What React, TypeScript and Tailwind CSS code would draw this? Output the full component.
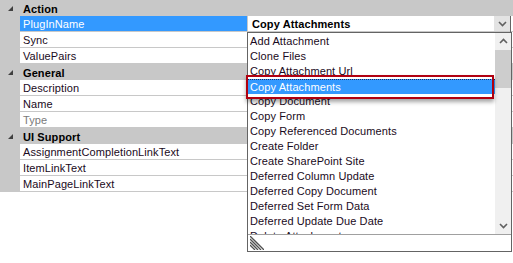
import React from 'react';

const font = { fontFamily: '"Liberation Sans", Arial, sans-serif' };

type Row = { name: string; selected?: boolean; readOnly?: boolean; value?: boolean };
type Category = { title: string; rows: Row[] };

const categories: Category[] = [
  {
    title: 'Action',
    rows: [{ name: 'PlugInName', selected: true, value: true }, { name: 'Sync' }, { name: 'ValuePairs' }],
  },
  {
    title: 'General',
    rows: [{ name: 'Description' }, { name: 'Name' }, { name: 'Type', readOnly: true }],
  },
  {
    title: 'UI Support',
    rows: [{ name: 'AssignmentCompletionLinkText' }, { name: 'ItemLinkText' }, { name: 'MainPageLinkText' }],
  },
];

const items = [
  'Add Attachment',
  'Clone Files',
  'Copy Attachment Url',
  'Copy Attachments',
  'Copy Document',
  'Copy Form',
  'Copy Referenced Documents',
  'Create Folder',
  'Create SharePoint Site',
  'Deferred Column Update',
  'Deferred Copy Document',
  'Deferred Set Form Data',
  'Deferred Update Due Date',
  'Delete Attachment',
];

function Chevron({ up }: { up?: boolean }) {
  return (
    <svg width="9" height="6" viewBox="0 0 9 6">
      <polyline
        points={up ? '1,5 4.5,1.5 8,5' : '1,1 4.5,4.5 8,1'}
        fill="none"
        stroke="#606060"
        strokeWidth="1.6"
      />
    </svg>
  );
}

function Expander() {
  return (
    <svg width="5" height="5" viewBox="0 0 5 5">
      <polygon points="5,0 5,5 0,5" fill="#404040" />
    </svg>
  );
}

export default function App() {
  return (
    <div className="relative w-[513px] h-[263px] bg-white overflow-hidden text-[11px] tracking-[0.1px] text-[#1a0a22]" style={font}>
      {/* property grid */}
      <div className="flex flex-col">
        {categories.map((cat) => (
          <div key={cat.title} className="flex flex-col">
            <div className="flex h-4 bg-[#c8c8c8] items-center">
              <div className="w-5 h-4 flex items-center justify-center pl-px pt-px">
                <Expander />
              </div>
              <span className="pl-[3px] pt-px font-bold text-black leading-4">{cat.title}</span>
            </div>
            {cat.rows.map((row) => (
              <div key={row.name} className="flex h-4">
                <div className="w-5 h-4 bg-[#c8c8c8]" />
                <div
                  className={
                    row.selected
                      ? 'w-[227px] h-4 pl-[3px] pt-px leading-[15px] bg-[#3399ff] text-white border-b border-[#c8c8c8]'
                      : row.readOnly
                        ? 'w-[227px] h-4 pl-[3px] pt-px leading-[15px] text-[#7a7a7a] border-b border-[#c8c8c8]'
                        : 'w-[227px] h-4 pl-[3px] pt-px leading-[15px] border-b border-[#c8c8c8]'
                  }
                >
                  {row.name}
                </div>
                <div className="flex-1 h-4 flex border-b border-[#c8c8c8] border-l border-l-[#c8c8c8]">
                  {row.value && (
                    <>
                      <span className="flex-1 pl-1 pt-px leading-[15px] font-bold text-black">Copy Attachments</span>
                      <div className="w-4 h-[15px] bg-[#e3e3e3] flex items-center justify-center">
                        <Chevron />
                      </div>
                      <div className="w-px h-4 bg-[#646464]" />
                      <div className="w-0.5" />
                    </>
                  )}
                </div>
              </div>
            ))}
          </div>
        ))}
      </div>

      {/* dropdown list */}
      <div className="absolute left-[247px] top-8 w-[265px] h-[220px] border border-[#646464] bg-white flex flex-col">
        <div className="flex flex-1 overflow-hidden">
          <div className="flex-1 flex flex-col overflow-hidden pt-px">
            {items.map((it) => (
              <div
                key={it}
                className={
                  it === 'Copy Attachments'
                    ? 'h-[15px] shrink-0 pl-0.5 leading-[14px] bg-[#3399ff] text-white border-t border-dotted border-[#1a2a60]'
                    : 'h-[15px] shrink-0 pl-0.5 leading-[15px] whitespace-nowrap'
                }
              >
                {it}
              </div>
            ))}
          </div>
          <div className="w-4 bg-[#f0f0f0] flex flex-col">
            <div className="h-4 flex items-center justify-center">
              <Chevron up />
            </div>
            <div className="h-[38px] mt-px bg-[#cdcdcd]" />
            <div className="flex-1" />
            <div className="h-4 flex items-center justify-center">
              <Chevron />
            </div>
          </div>
        </div>
        <div className="h-[17px] border-t border-[#a0a0a0] flex items-end pl-0.5 pb-px">
          <svg width="14" height="14" viewBox="0 0 14 14">
            {[0, 3, 6, 9].map((o) => (
              <line key={o} x1={0} y1={o} x2={14 - o} y2={14} stroke="#505050" strokeWidth="1.3" />
            ))}
          </svg>
        </div>
      </div>

      {/* annotation box */}
      <div className="absolute left-[246px] top-[75px] w-[248px] h-6 border-2 border-[#b00010] shadow-[0_3px_4px_rgba(0,0,0,0.35)]" />
    </div>
  );
}
